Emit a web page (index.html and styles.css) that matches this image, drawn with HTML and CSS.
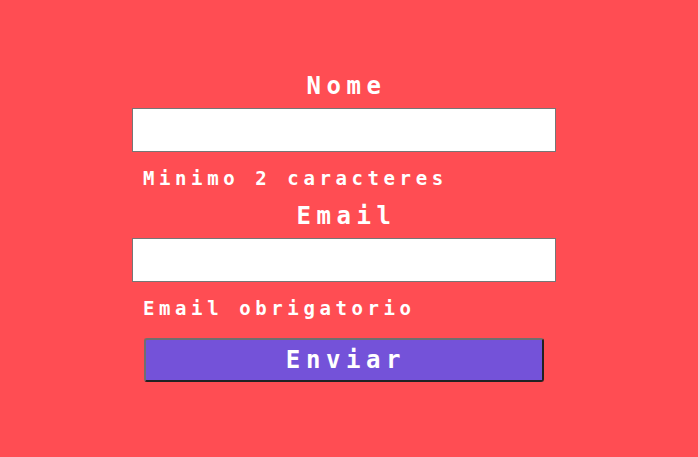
FILE: index.html
```html
<!DOCTYPE html>
<html lang="pt">
<head>
<meta charset="utf-8">
<title>Formulário</title>
<link rel="stylesheet" href="styles.css">
</head>
<body>
<form class="form">
  <label class="label" for="nome">Nome</label>
  <input class="field" id="nome" type="text">
  <p class="error">Minimo 2 caracteres</p>
  <label class="label" for="email">Email</label>
  <input class="field" id="email" type="email">
  <p class="error">Email obrigatorio</p>
  <button class="submit" type="button">Enviar</button>
</form>
</body>
</html>
```
FILE: styles.css
```css
html, body {
  margin: 0;
  padding: 0;
  background: #ff4d53;
  height: 100%;
}
body {
  font-family: "DejaVu Sans Mono", "Liberation Mono", monospace;
  font-weight: bold;
  color: #ffffff;
}
.form {
  width: 424px;
  margin: 0 0 0 132px;
  padding-top: 72px;
  display: flex;
  flex-direction: column;
}
.label {
  display: block;
  text-align: center;
  font-size: 24px;
  line-height: 28px;
  letter-spacing: 5.6px;
  padding-left: 5px;
  margin-bottom: 8px;
}
.field {
  box-sizing: border-box;
  width: 424px;
  height: 44px;
  margin: 0;
  border: 1px solid #767676;
  background: #ffffff;
  padding: 0;
}
.error {
  margin: 0;
  font-size: 19px;
  line-height: 24px;
  letter-spacing: 4.6px;
  padding: 14px 0 12px 11px;
}
.submit {
  box-sizing: border-box;
  width: 400px;
  height: 44px;
  margin: 6px 0 0 12px;
  background: #7452d9;
  color: #ffffff;
  font-family: "DejaVu Sans Mono", "Liberation Mono", monospace;
  font-weight: bold;
  font-size: 24px;
  letter-spacing: 5.6px;
  border: 2px solid;
  border-color: #6f6f6f #222222 #222222 #6f6f6f;
  border-radius: 3px;
  padding: 0 0 0 4px;
}
```
